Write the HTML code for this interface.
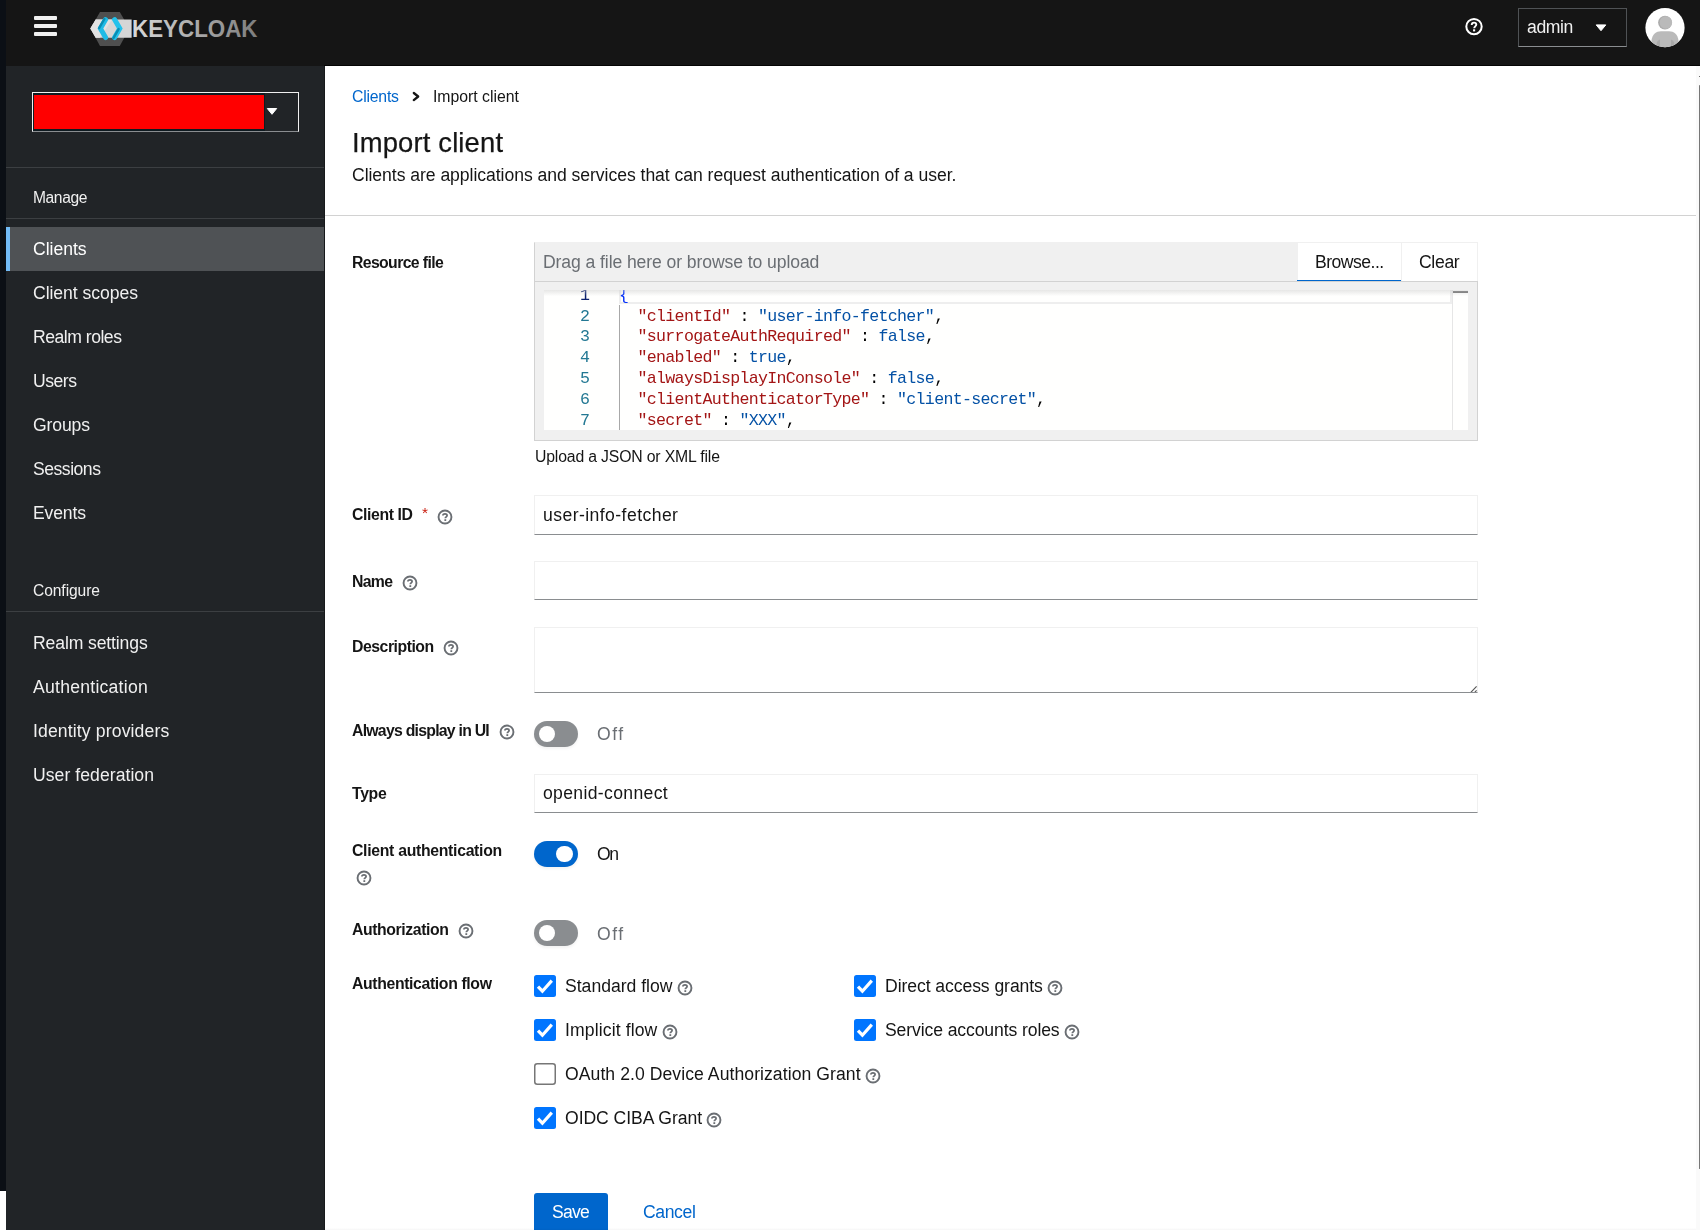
<!DOCTYPE html>
<html><head><meta charset="utf-8"><title>Import client</title>
<style>
html,body{margin:0;padding:0;}
body{width:1700px;height:1230px;position:relative;overflow:hidden;background:#fff;font-family:"Liberation Sans", sans-serif;}
.t{position:absolute;white-space:nowrap;will-change:transform;}
</style></head><body>
<div style="position:absolute;left:0px;top:0px;width:1700px;height:66px;background:#151515"></div>
<div style="position:absolute;left:324px;top:65px;width:1376px;height:1px;background:#050505"></div>
<div style="position:absolute;left:0px;top:0px;width:6px;height:1191px;background:#0b0f15"></div>
<div style="position:absolute;left:6px;top:66px;width:319px;height:1164px;background:#212427"></div>
<div style="position:absolute;left:324px;top:66px;width:1px;height:1164px;background:#17191b"></div>
<div style="position:absolute;left:34px;top:16px;width:23.2px;height:4px;background:#f0f0f0;border-radius:1px"></div>
<div style="position:absolute;left:34px;top:24px;width:23.2px;height:4px;background:#f0f0f0;border-radius:1px"></div>
<div style="position:absolute;left:34px;top:32px;width:23.2px;height:4px;background:#f0f0f0;border-radius:1px"></div>
<svg style="position:absolute;left:88px;top:10px" width="172" height="38" viewBox="88 10 172 38">
<defs><linearGradient id="kg" x1="0" x2="1"><stop offset="0" stop-color="#d9d9d9"/><stop offset="1" stop-color="#7d7d7d"/></linearGradient></defs>
<polygon points="90.5,28.5 100,12 119.8,12 129.3,28.5 119.8,46 100,46" fill="#4f4f4f"/>
<polygon points="95.7,19.6 131.6,19.6 131.6,37.8 95.7,37.8 90.3,28.5" fill="#d6d6d6"/>
<polygon points="90.3,28.5 95.7,19.6 112,19.6 100,37.8 95.7,37.8" fill="#e2e2e2"/>
<path d="M105.6 19.6 L100.4 28.5 L105.6 37.6" fill="none" stroke="#1fbbe6" stroke-width="5" stroke-linecap="round" stroke-linejoin="miter"/>
<path d="M104.4 19.0 L99.2 27.9" fill="none" stroke="#0a8db3" stroke-width="2.4" stroke-linecap="round"/>
<path d="M114.6 19.6 L119.8 28.5 L114.6 37.6" fill="none" stroke="#22c2ec" stroke-width="5" stroke-linecap="round" stroke-linejoin="miter"/>
<path d="M118.6 29.1 L113.4 38.1" fill="none" stroke="#0a8db3" stroke-width="2.4" stroke-linecap="round"/>
<text x="132" y="37.4" font-family="Liberation Sans" font-weight="700" font-size="24.4" textLength="125.5" lengthAdjust="spacingAndGlyphs" fill="url(#kg)">KEYCLOAK</text>
</svg>
<svg style="position:absolute;left:1464px;top:17px" width="20" height="20" viewBox="0 0 20 20">
<circle cx="10" cy="9.6" r="7.7" fill="none" stroke="#fff" stroke-width="2"/>
<path d="M7.7 8.1 C7.7 6.5 8.7 5.6 10 5.6 C11.4 5.6 12.3 6.5 12.3 7.6 C12.3 9.3 10.2 9.4 10.2 11.3" fill="none" stroke="#fff" stroke-width="1.9"/>
<rect x="9.05" y="12.3" width="2.1" height="2.1" fill="#fff"/>
</svg>
<div style="position:absolute;left:1518px;top:8px;width:109px;height:39px;box-sizing:border-box;border:1px solid #4f5255;border-bottom-color:#8a8d90"></div>
<div class="t" style="left:1527.40px;top:19px;font-size:17.6px;line-height:17.6px;color:#f0f0f0;letter-spacing:-0.390px;">admin</div>
<svg style="position:absolute;left:1595px;top:23px" width="12" height="9" viewBox="0 0 12 9"><polygon points="1.2,1.9 10.8,1.9 6,7.7" fill="#fff" stroke="#fff" stroke-width="1" stroke-linejoin="round"/></svg>
<svg style="position:absolute;left:1645px;top:8px" width="40" height="40" viewBox="0 0 40 40">
<defs><clipPath id="av"><circle cx="20" cy="19.7" r="19.6"/></clipPath></defs>
<circle cx="20" cy="19.7" r="19.6" fill="#fff"/>
<g clip-path="url(#av)">
<circle cx="20" cy="14.6" r="6.9" fill="#acacac"/>
<circle cx="20.9" cy="14.5" r="6.2" fill="#bababa"/>
<path d="M5.8 40 L6.6 31.8 C7.4 26.6 11 23.3 16 23.3 L24 23.3 C29 23.3 32.6 26.6 33.4 31.8 L34.2 40 Z" fill="#bababa"/>
<path d="M11.8 40 L11.8 34.8 Q12.3 32.2 15 31.4 L15 40 Z" fill="#a9a9a9"/>
<path d="M29.2 40 L29.2 34.8 Q28.7 32.2 26 31.4 L26 40 Z" fill="#a9a9a9"/>
</g></svg>
<div style="position:absolute;left:32px;top:92px;width:267px;height:40px;box-sizing:border-box;border:1px solid #f0f0f0;border-bottom-color:#8a8d90"></div>
<div style="position:absolute;left:33px;top:93px;width:232px;height:38px;background:#0f1b21"></div>
<div style="position:absolute;left:34px;top:95px;width:230px;height:34px;background:#ff0000"></div>
<svg style="position:absolute;left:266px;top:107px" width="12" height="9" viewBox="0 0 12 9"><polygon points="1.3,1.5 10.7,1.5 6,7.3" fill="#fff" stroke="#fff" stroke-width="1" stroke-linejoin="round"/></svg>
<div style="position:absolute;left:6px;top:167px;width:318px;height:1px;background:#3c3f42"></div>
<div class="t" style="left:33.00px;top:190px;font-size:15.6px;line-height:15.6px;color:#f0f0f0;letter-spacing:-0.399px;">Manage</div>
<div style="position:absolute;left:6px;top:218px;width:318px;height:1px;background:#3c3f42"></div>
<div style="position:absolute;left:6px;top:227px;width:318px;height:44px;background:#4f5255"></div>
<div style="position:absolute;left:6px;top:227px;width:4px;height:44px;background:#73bcf7"></div>
<div class="t" style="left:33.00px;top:241px;font-size:17.6px;line-height:17.6px;color:#fff;letter-spacing:-0.028px;">Clients</div>
<div class="t" style="left:33.00px;top:285px;font-size:17.6px;line-height:17.6px;color:#f0f0f0;letter-spacing:-0.057px;">Client scopes</div>
<div class="t" style="left:33.00px;top:329px;font-size:17.6px;line-height:17.6px;color:#f0f0f0;letter-spacing:-0.490px;">Realm roles</div>
<div class="t" style="left:33.00px;top:373px;font-size:17.6px;line-height:17.6px;color:#f0f0f0;letter-spacing:-0.484px;">Users</div>
<div class="t" style="left:33.00px;top:417px;font-size:17.6px;line-height:17.6px;color:#f0f0f0;letter-spacing:-0.146px;">Groups</div>
<div class="t" style="left:33.00px;top:461px;font-size:17.6px;line-height:17.6px;color:#f0f0f0;letter-spacing:-0.494px;">Sessions</div>
<div class="t" style="left:33.00px;top:505px;font-size:17.6px;line-height:17.6px;color:#f0f0f0;letter-spacing:-0.154px;">Events</div>
<div class="t" style="left:33.00px;top:583px;font-size:15.6px;line-height:15.6px;color:#f0f0f0;letter-spacing:-0.078px;">Configure</div>
<div style="position:absolute;left:6px;top:611px;width:318px;height:1px;background:#3c3f42"></div>
<div class="t" style="left:33.00px;top:635px;font-size:17.6px;line-height:17.6px;color:#f0f0f0;letter-spacing:-0.125px;">Realm settings</div>
<div class="t" style="left:33.00px;top:679px;font-size:17.6px;line-height:17.6px;color:#f0f0f0;letter-spacing:0.247px;">Authentication</div>
<div class="t" style="left:33.00px;top:723px;font-size:17.6px;line-height:17.6px;color:#f0f0f0;letter-spacing:0.134px;">Identity providers</div>
<div class="t" style="left:33.00px;top:767px;font-size:17.6px;line-height:17.6px;color:#f0f0f0;letter-spacing:0.050px;">User federation</div>
<div class="t" style="left:352.00px;top:89px;font-size:15.8px;line-height:15.8px;color:#0066cc;letter-spacing:-0.212px;">Clients</div>
<svg style="position:absolute;left:410px;top:90px" width="12" height="13" viewBox="0 0 12 13"><path d="M3.8 3 L8.2 6.5 L3.8 10.1" fill="none" stroke="#151515" stroke-width="2.3" stroke-linecap="round" stroke-linejoin="round"/></svg>
<div class="t" style="left:433.00px;top:89px;font-size:15.8px;line-height:15.8px;color:#151515;letter-spacing:-0.019px;">Import client</div>
<div class="t" style="left:352.40px;top:129px;font-size:27.4px;line-height:27.4px;color:#151515;letter-spacing:0.151px;-webkit-text-stroke:0.25px #151515;">Import client</div>
<div class="t" style="left:352.00px;top:167px;font-size:17.6px;line-height:17.6px;color:#151515;letter-spacing:-0.050px;">Clients are applications and services that can request authentication of a user.</div>
<div style="position:absolute;left:325px;top:215px;width:1371px;height:1px;background:#d2d2d2"></div>
<div class="t" style="left:352.30px;top:255px;font-size:15.8px;line-height:15.8px;color:#151515;font-weight:700;letter-spacing:-0.627px;">Resource file</div>
<div style="position:absolute;left:534px;top:242px;width:944px;height:199px;box-sizing:border-box;border:1px solid #d2d2d2;border-top-color:#f0f0f0;background:#f0f0f0"></div>
<div style="position:absolute;left:1297px;top:242px;width:181px;height:39px;background:#fff;box-sizing:border-box;border:1px solid #f0f0f0;border-bottom:none"></div>
<div style="position:absolute;left:1401px;top:242px;width:1px;height:39px;background:#f0f0f0"></div>
<div style="position:absolute;left:1297px;top:279.6px;width:104px;height:1.4px;background:#0066cc"></div>
<div style="position:absolute;left:534px;top:281px;width:944px;height:1px;background:#d2d2d2"></div>
<div class="t" style="left:543.20px;top:254px;font-size:17.6px;line-height:17.6px;color:#6a6e73;letter-spacing:-0.095px;">Drag a file here or browse to upload</div>
<div class="t" style="left:1314.60px;top:254px;font-size:17.6px;line-height:17.6px;color:#151515;letter-spacing:-0.524px;">Browse...</div>
<div class="t" style="left:1419.00px;top:254px;font-size:17.6px;line-height:17.6px;color:#151515;letter-spacing:-0.341px;">Clear</div>
<div style="position:absolute;left:544px;top:290px;width:924px;height:140px;background:#fffffe;overflow:hidden">
<div style="position:absolute;left:75px;top:0;width:833px;height:14px;box-sizing:border-box;border:2px solid #eeeeee;border-top:none"></div>
<div style="position:absolute;left:75px;top:15px;width:1px;height:125px;background:#a8a8a8"></div>
<div class="t" style="left:36.230000000000004px;top:-2.40px;font-family:'Liberation Mono',monospace;font-size:16.6px;line-height:16.6px;color:#0b216f;width:9.27px;text-align:right">1</div>
<div class="t" style="left:75px;top:-2.40px;font-family:'Liberation Mono',monospace;font-size:16.6px;line-height:16.6px;letter-spacing:-0.690px;white-space:pre"><span style="color:#0431fa">{</span></div>
<div class="t" style="left:36.230000000000004px;top:18.50px;font-family:'Liberation Mono',monospace;font-size:16.6px;line-height:16.6px;color:#237893;width:9.27px;text-align:right">2</div>
<div class="t" style="left:75px;top:18.50px;font-family:'Liberation Mono',monospace;font-size:16.6px;line-height:16.6px;letter-spacing:-0.690px;white-space:pre"><span style="color:#000000">  </span><span style="color:#a31515">&quot;clientId&quot;</span><span style="color:#000000"> : </span><span style="color:#0451a5">&quot;user-info-fetcher&quot;</span><span style="color:#000000">,</span></div>
<div class="t" style="left:36.230000000000004px;top:39.40px;font-family:'Liberation Mono',monospace;font-size:16.6px;line-height:16.6px;color:#237893;width:9.27px;text-align:right">3</div>
<div class="t" style="left:75px;top:39.40px;font-family:'Liberation Mono',monospace;font-size:16.6px;line-height:16.6px;letter-spacing:-0.690px;white-space:pre"><span style="color:#000000">  </span><span style="color:#a31515">&quot;surrogateAuthRequired&quot;</span><span style="color:#000000"> : </span><span style="color:#0451a5">false</span><span style="color:#000000">,</span></div>
<div class="t" style="left:36.230000000000004px;top:60.30px;font-family:'Liberation Mono',monospace;font-size:16.6px;line-height:16.6px;color:#237893;width:9.27px;text-align:right">4</div>
<div class="t" style="left:75px;top:60.30px;font-family:'Liberation Mono',monospace;font-size:16.6px;line-height:16.6px;letter-spacing:-0.690px;white-space:pre"><span style="color:#000000">  </span><span style="color:#a31515">&quot;enabled&quot;</span><span style="color:#000000"> : </span><span style="color:#0451a5">true</span><span style="color:#000000">,</span></div>
<div class="t" style="left:36.230000000000004px;top:81.20px;font-family:'Liberation Mono',monospace;font-size:16.6px;line-height:16.6px;color:#237893;width:9.27px;text-align:right">5</div>
<div class="t" style="left:75px;top:81.20px;font-family:'Liberation Mono',monospace;font-size:16.6px;line-height:16.6px;letter-spacing:-0.690px;white-space:pre"><span style="color:#000000">  </span><span style="color:#a31515">&quot;alwaysDisplayInConsole&quot;</span><span style="color:#000000"> : </span><span style="color:#0451a5">false</span><span style="color:#000000">,</span></div>
<div class="t" style="left:36.230000000000004px;top:102.10px;font-family:'Liberation Mono',monospace;font-size:16.6px;line-height:16.6px;color:#237893;width:9.27px;text-align:right">6</div>
<div class="t" style="left:75px;top:102.10px;font-family:'Liberation Mono',monospace;font-size:16.6px;line-height:16.6px;letter-spacing:-0.690px;white-space:pre"><span style="color:#000000">  </span><span style="color:#a31515">&quot;clientAuthenticatorType&quot;</span><span style="color:#000000"> : </span><span style="color:#0451a5">&quot;client-secret&quot;</span><span style="color:#000000">,</span></div>
<div class="t" style="left:36.230000000000004px;top:123.00px;font-family:'Liberation Mono',monospace;font-size:16.6px;line-height:16.6px;color:#237893;width:9.27px;text-align:right">7</div>
<div class="t" style="left:75px;top:123.00px;font-family:'Liberation Mono',monospace;font-size:16.6px;line-height:16.6px;letter-spacing:-0.690px;white-space:pre"><span style="color:#000000">  </span><span style="color:#a31515">&quot;secret&quot;</span><span style="color:#000000"> : </span><span style="color:#0451a5">&quot;XXX&quot;</span><span style="color:#000000">,</span></div>
<div style="position:absolute;left:908px;top:0;width:1px;height:140px;background:#e6e6e6"></div>
<div style="position:absolute;left:909px;top:1px;width:15px;height:1.5px;background:#6e6e6e"></div>
<div style="position:absolute;left:0;top:0;width:924px;height:6px;background:linear-gradient(rgba(200,200,200,0.45),rgba(255,255,255,0))"></div>
</div>
<div class="t" style="left:534.50px;top:449px;font-size:15.8px;line-height:15.8px;color:#151515;letter-spacing:-0.172px;">Upload a JSON or XML file</div>
<div class="t" style="left:352.00px;top:507px;font-size:15.8px;line-height:15.8px;color:#151515;font-weight:700;letter-spacing:-0.384px;">Client ID</div>
<div class="t" style="left:422.00px;top:504.5px;font-size:15.4px;line-height:15.4px;color:#c9190b;">*</div>
<svg style="position:absolute;left:435.5px;top:507.70000000000005px" width="18" height="18" viewBox="0 0 18 18">
<circle cx="9" cy="9" r="6.45" fill="none" stroke="#6a6e73" stroke-width="1.9"/>
<path d="M6.9 7.6 C6.9 6.3 7.9 5.8 9 5.8 C10.2 5.8 11.1 6.4 11.1 7.5 C11.1 8.8 9.3 8.9 9.3 10.2" fill="none" stroke="#6a6e73" stroke-width="1.75"/>
<rect x="8.4" y="11.2" width="1.8" height="1.8" fill="#6a6e73"/>
</svg>
<div style="position:absolute;left:534px;top:495px;width:944px;height:40px;box-sizing:border-box;border:1px solid #f0f0f0;border-bottom:1px solid #8a8d90;background:#fff"></div>
<div class="t" style="left:543.30px;top:507px;font-size:17.6px;line-height:17.6px;color:#151515;letter-spacing:0.429px;">user-info-fetcher</div>
<div class="t" style="left:352.00px;top:573.5px;font-size:15.8px;line-height:15.8px;color:#151515;font-weight:700;letter-spacing:-0.685px;">Name</div>
<svg style="position:absolute;left:400.7px;top:573.8px" width="18" height="18" viewBox="0 0 18 18">
<circle cx="9" cy="9" r="6.45" fill="none" stroke="#6a6e73" stroke-width="1.9"/>
<path d="M6.9 7.6 C6.9 6.3 7.9 5.8 9 5.8 C10.2 5.8 11.1 6.4 11.1 7.5 C11.1 8.8 9.3 8.9 9.3 10.2" fill="none" stroke="#6a6e73" stroke-width="1.75"/>
<rect x="8.4" y="11.2" width="1.8" height="1.8" fill="#6a6e73"/>
</svg>
<div style="position:absolute;left:534px;top:561px;width:944px;height:39px;box-sizing:border-box;border:1px solid #f0f0f0;border-bottom:1px solid #8a8d90;background:#fff"></div>
<div class="t" style="left:352.00px;top:639px;font-size:15.8px;line-height:15.8px;color:#151515;font-weight:700;letter-spacing:-0.470px;">Description</div>
<svg style="position:absolute;left:441.5px;top:638.8px" width="18" height="18" viewBox="0 0 18 18">
<circle cx="9" cy="9" r="6.45" fill="none" stroke="#6a6e73" stroke-width="1.9"/>
<path d="M6.9 7.6 C6.9 6.3 7.9 5.8 9 5.8 C10.2 5.8 11.1 6.4 11.1 7.5 C11.1 8.8 9.3 8.9 9.3 10.2" fill="none" stroke="#6a6e73" stroke-width="1.75"/>
<rect x="8.4" y="11.2" width="1.8" height="1.8" fill="#6a6e73"/>
</svg>
<div style="position:absolute;left:534px;top:627px;width:944px;height:66px;box-sizing:border-box;border:1px solid #f0f0f0;border-bottom:1px solid #8a8d90;background:#fff"></div>
<svg style="position:absolute;left:1468px;top:683px" width="9" height="9" viewBox="0 0 9 9"><path d="M8.6 3.4 L2.6 9.6 M8.6 7.3 L6.5 9.6" stroke="#555" stroke-width="1.1"/></svg>
<div class="t" style="left:352.00px;top:722.5px;font-size:15.8px;line-height:15.8px;color:#151515;font-weight:700;letter-spacing:-0.743px;">Always display in UI</div>
<svg style="position:absolute;left:497.5px;top:723.3px" width="18" height="18" viewBox="0 0 18 18">
<circle cx="9" cy="9" r="6.45" fill="none" stroke="#6a6e73" stroke-width="1.9"/>
<path d="M6.9 7.6 C6.9 6.3 7.9 5.8 9 5.8 C10.2 5.8 11.1 6.4 11.1 7.5 C11.1 8.8 9.3 8.9 9.3 10.2" fill="none" stroke="#6a6e73" stroke-width="1.75"/>
<rect x="8.4" y="11.2" width="1.8" height="1.8" fill="#6a6e73"/>
</svg>
<div style="position:absolute;left:534px;top:721px;width:44px;height:26px;background:#8a8d90;border-radius:13px;box-shadow:0 2px 3px rgba(0,0,0,0.05)"></div>
<div style="position:absolute;left:538.6999999999999px;top:725.8px;width:16.4px;height:16.4px;border-radius:50%;background:#fff"></div>
<div class="t" style="left:596.50px;top:726px;font-size:17.6px;line-height:17.6px;color:#6a6e73;letter-spacing:1.484px;">Off</div>
<div class="t" style="left:352.00px;top:786px;font-size:15.8px;line-height:15.8px;color:#151515;font-weight:700;letter-spacing:-0.336px;">Type</div>
<div style="position:absolute;left:534px;top:774px;width:944px;height:39px;box-sizing:border-box;border:1px solid #f0f0f0;border-bottom:1px solid #8a8d90;background:#fff"></div>
<div class="t" style="left:543.00px;top:785px;font-size:17.6px;line-height:17.6px;color:#151515;letter-spacing:0.340px;">openid-connect</div>
<div class="t" style="left:352.00px;top:842.5px;font-size:15.8px;line-height:15.8px;color:#151515;font-weight:700;letter-spacing:-0.303px;">Client authentication</div>
<svg style="position:absolute;left:354.6px;top:869.3px" width="18" height="18" viewBox="0 0 18 18">
<circle cx="9" cy="9" r="6.45" fill="none" stroke="#6a6e73" stroke-width="1.9"/>
<path d="M6.9 7.6 C6.9 6.3 7.9 5.8 9 5.8 C10.2 5.8 11.1 6.4 11.1 7.5 C11.1 8.8 9.3 8.9 9.3 10.2" fill="none" stroke="#6a6e73" stroke-width="1.75"/>
<rect x="8.4" y="11.2" width="1.8" height="1.8" fill="#6a6e73"/>
</svg>
<div style="position:absolute;left:534px;top:841px;width:44px;height:26px;background:#0066cc;border-radius:13px;box-shadow:0 2px 3px rgba(0,0,0,0.05)"></div>
<div style="position:absolute;left:556.4px;top:845.8px;width:16.4px;height:16.4px;border-radius:50%;background:#fff"></div>
<div class="t" style="left:596.50px;top:846px;font-size:17.6px;line-height:17.6px;color:#151515;letter-spacing:-1.496px;">On</div>
<div class="t" style="left:352.00px;top:922px;font-size:15.8px;line-height:15.8px;color:#151515;font-weight:700;letter-spacing:-0.411px;">Authorization</div>
<svg style="position:absolute;left:456.6px;top:921.8px" width="18" height="18" viewBox="0 0 18 18">
<circle cx="9" cy="9" r="6.45" fill="none" stroke="#6a6e73" stroke-width="1.9"/>
<path d="M6.9 7.6 C6.9 6.3 7.9 5.8 9 5.8 C10.2 5.8 11.1 6.4 11.1 7.5 C11.1 8.8 9.3 8.9 9.3 10.2" fill="none" stroke="#6a6e73" stroke-width="1.75"/>
<rect x="8.4" y="11.2" width="1.8" height="1.8" fill="#6a6e73"/>
</svg>
<div style="position:absolute;left:534px;top:920px;width:44px;height:26px;background:#8a8d90;border-radius:13px;box-shadow:0 2px 3px rgba(0,0,0,0.05)"></div>
<div style="position:absolute;left:538.6999999999999px;top:924.8px;width:16.4px;height:16.4px;border-radius:50%;background:#fff"></div>
<div class="t" style="left:596.50px;top:926px;font-size:17.6px;line-height:17.6px;color:#6a6e73;letter-spacing:1.484px;">Off</div>
<div class="t" style="left:352.00px;top:975.5px;font-size:15.8px;line-height:15.8px;color:#151515;font-weight:700;letter-spacing:-0.368px;">Authentication flow</div>
<svg style="position:absolute;left:534px;top:975px" width="22" height="22" viewBox="0 0 22 22"><rect x="0" y="0" width="22" height="22" rx="2.5" fill="#0075ff"/><path d="M4 11.6 L8.4 16.2 L17.8 5.6" fill="none" stroke="#fff" stroke-width="3.2"/></svg>
<div class="t" style="left:565.20px;top:977.5px;font-size:17.6px;line-height:17.6px;color:#151515;letter-spacing:-0.009px;">Standard flow</div>
<svg style="position:absolute;left:675.6px;top:978.8px" width="18" height="18" viewBox="0 0 18 18">
<circle cx="9" cy="9" r="6.45" fill="none" stroke="#6a6e73" stroke-width="1.9"/>
<path d="M6.9 7.6 C6.9 6.3 7.9 5.8 9 5.8 C10.2 5.8 11.1 6.4 11.1 7.5 C11.1 8.8 9.3 8.9 9.3 10.2" fill="none" stroke="#6a6e73" stroke-width="1.75"/>
<rect x="8.4" y="11.2" width="1.8" height="1.8" fill="#6a6e73"/>
</svg>
<svg style="position:absolute;left:854px;top:975px" width="22" height="22" viewBox="0 0 22 22"><rect x="0" y="0" width="22" height="22" rx="2.5" fill="#0075ff"/><path d="M4 11.6 L8.4 16.2 L17.8 5.6" fill="none" stroke="#fff" stroke-width="3.2"/></svg>
<div class="t" style="left:885.30px;top:977.5px;font-size:17.6px;line-height:17.6px;color:#151515;letter-spacing:-0.077px;">Direct access grants</div>
<svg style="position:absolute;left:1045.5px;top:978.8px" width="18" height="18" viewBox="0 0 18 18">
<circle cx="9" cy="9" r="6.45" fill="none" stroke="#6a6e73" stroke-width="1.9"/>
<path d="M6.9 7.6 C6.9 6.3 7.9 5.8 9 5.8 C10.2 5.8 11.1 6.4 11.1 7.5 C11.1 8.8 9.3 8.9 9.3 10.2" fill="none" stroke="#6a6e73" stroke-width="1.75"/>
<rect x="8.4" y="11.2" width="1.8" height="1.8" fill="#6a6e73"/>
</svg>
<svg style="position:absolute;left:534px;top:1019px" width="22" height="22" viewBox="0 0 22 22"><rect x="0" y="0" width="22" height="22" rx="2.5" fill="#0075ff"/><path d="M4 11.6 L8.4 16.2 L17.8 5.6" fill="none" stroke="#fff" stroke-width="3.2"/></svg>
<div class="t" style="left:565.20px;top:1021.7px;font-size:17.6px;line-height:17.6px;color:#151515;letter-spacing:0.117px;">Implicit flow</div>
<svg style="position:absolute;left:660.5px;top:1023.0px" width="18" height="18" viewBox="0 0 18 18">
<circle cx="9" cy="9" r="6.45" fill="none" stroke="#6a6e73" stroke-width="1.9"/>
<path d="M6.9 7.6 C6.9 6.3 7.9 5.8 9 5.8 C10.2 5.8 11.1 6.4 11.1 7.5 C11.1 8.8 9.3 8.9 9.3 10.2" fill="none" stroke="#6a6e73" stroke-width="1.75"/>
<rect x="8.4" y="11.2" width="1.8" height="1.8" fill="#6a6e73"/>
</svg>
<svg style="position:absolute;left:854px;top:1019px" width="22" height="22" viewBox="0 0 22 22"><rect x="0" y="0" width="22" height="22" rx="2.5" fill="#0075ff"/><path d="M4 11.6 L8.4 16.2 L17.8 5.6" fill="none" stroke="#fff" stroke-width="3.2"/></svg>
<div class="t" style="left:885.30px;top:1021.7px;font-size:17.6px;line-height:17.6px;color:#151515;letter-spacing:-0.112px;">Service accounts roles</div>
<svg style="position:absolute;left:1062.5px;top:1023.0px" width="18" height="18" viewBox="0 0 18 18">
<circle cx="9" cy="9" r="6.45" fill="none" stroke="#6a6e73" stroke-width="1.9"/>
<path d="M6.9 7.6 C6.9 6.3 7.9 5.8 9 5.8 C10.2 5.8 11.1 6.4 11.1 7.5 C11.1 8.8 9.3 8.9 9.3 10.2" fill="none" stroke="#6a6e73" stroke-width="1.75"/>
<rect x="8.4" y="11.2" width="1.8" height="1.8" fill="#6a6e73"/>
</svg>
<svg style="position:absolute;left:534px;top:1063px" width="22" height="22" viewBox="0 0 22 22"><rect x="0.75" y="0.75" width="20.5" height="20.5" rx="2.5" fill="#fff" stroke="#767676" stroke-width="1.5"/></svg>
<div class="t" style="left:565.20px;top:1066px;font-size:17.6px;line-height:17.6px;color:#151515;letter-spacing:0.061px;">OAuth 2.0 Device Authorization Grant</div>
<svg style="position:absolute;left:863.5px;top:1067.3px" width="18" height="18" viewBox="0 0 18 18">
<circle cx="9" cy="9" r="6.45" fill="none" stroke="#6a6e73" stroke-width="1.9"/>
<path d="M6.9 7.6 C6.9 6.3 7.9 5.8 9 5.8 C10.2 5.8 11.1 6.4 11.1 7.5 C11.1 8.8 9.3 8.9 9.3 10.2" fill="none" stroke="#6a6e73" stroke-width="1.75"/>
<rect x="8.4" y="11.2" width="1.8" height="1.8" fill="#6a6e73"/>
</svg>
<svg style="position:absolute;left:534px;top:1107px" width="22" height="22" viewBox="0 0 22 22"><rect x="0" y="0" width="22" height="22" rx="2.5" fill="#0075ff"/><path d="M4 11.6 L8.4 16.2 L17.8 5.6" fill="none" stroke="#fff" stroke-width="3.2"/></svg>
<div class="t" style="left:565.20px;top:1109.8px;font-size:17.6px;line-height:17.6px;color:#151515;letter-spacing:-0.057px;">OIDC CIBA Grant</div>
<svg style="position:absolute;left:704.5px;top:1111.1px" width="18" height="18" viewBox="0 0 18 18">
<circle cx="9" cy="9" r="6.45" fill="none" stroke="#6a6e73" stroke-width="1.9"/>
<path d="M6.9 7.6 C6.9 6.3 7.9 5.8 9 5.8 C10.2 5.8 11.1 6.4 11.1 7.5 C11.1 8.8 9.3 8.9 9.3 10.2" fill="none" stroke="#6a6e73" stroke-width="1.75"/>
<rect x="8.4" y="11.2" width="1.8" height="1.8" fill="#6a6e73"/>
</svg>
<div style="position:absolute;left:534px;top:1193px;width:74px;height:45px;background:#0066cc;border-radius:3px"></div>
<div class="t" style="left:551.50px;top:1204.2px;font-size:17.6px;line-height:17.6px;color:#fff;letter-spacing:-0.776px;">Save</div>
<div class="t" style="left:643.40px;top:1204.2px;font-size:17.6px;line-height:17.6px;color:#0066cc;letter-spacing:-0.385px;">Cancel</div>
<div style="position:absolute;left:1696px;top:66px;width:4px;height:1164px;background:#fafafa"></div>
<div style="position:absolute;left:1699px;top:76px;width:1px;height:1.3px;background:#6a6a6a"></div>
<div style="position:absolute;left:1698.5px;top:85px;width:1.5px;height:1084px;background:#777;border-radius:1px"></div>
<div style="position:absolute;left:325px;top:1228px;width:1371px;height:2px;background:linear-gradient(rgba(0,0,0,0),rgba(0,0,0,0.04))"></div>
<div style="position:absolute;left:0px;top:1191px;width:6px;height:39px;background:#fff"></div>
</body></html>
